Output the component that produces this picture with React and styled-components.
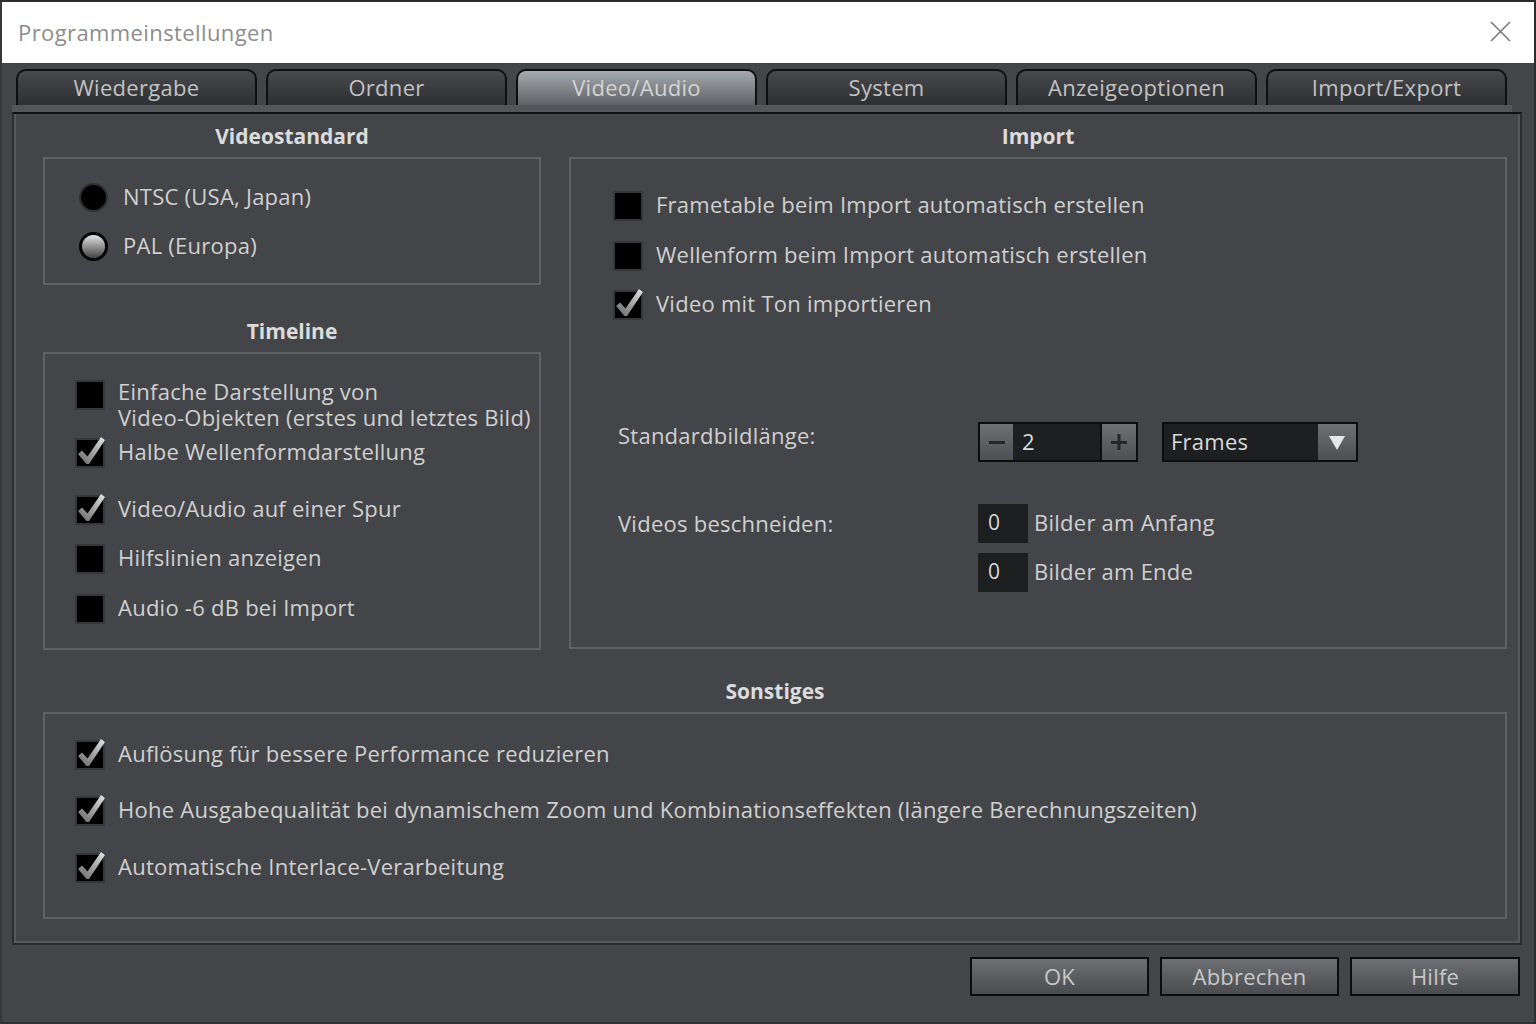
import React from 'react'
import styled, { createGlobalStyle, css } from 'styled-components'

const GlobalStyle = createGlobalStyle`
  html, body {
    margin: 0;
    padding: 0;
    background: #2c2d30;
  }
  body {
    font-family: "Open Sans", "Noto Sans", sans-serif;
  }
`

const Screen = styled.div`
  width: 1536px;
  height: 1024px;
  overflow: hidden;
  box-sizing: border-box;
  padding-top: 2px;
  background: #2c2d30;
`
const Dialog = styled.div`
  width: 1534px;
  height: 1022px;
  box-sizing: border-box;
  display: flex;
  flex-direction: column;
  background: #444549;
  border-left: 2px solid #37383b;
  border-bottom: 2px solid #303134;
`
const TitleBar = styled.div`
  height: 61px;
  flex-shrink: 0;
  background: #ffffff;
  display: flex;
  align-items: center;
  justify-content: space-between;
  padding: 0 23px 2px 16px;
  box-sizing: border-box;
`
const Title = styled.span`
  font-size: 22px;
  letter-spacing: 0.4px;
  color: #8d8d8d;
`
const TabRow = styled.div`
  display: flex;
  gap: 9px;
  height: 36px;
  margin-top: 6px;
  padding-left: 14px;
`
const Tab = styled.div`
  width: 241px;
  height: 36px;
  box-sizing: border-box;
  border: 2px solid #0e0f10;
  border-bottom: none;
  border-radius: 10px 10px 0 0;
  display: flex;
  align-items: center;
  justify-content: center;
  padding-bottom: 2px;
  font-size: 22px;
  letter-spacing: 0.3px;
  ${p => p.$active
    ? css`
        background: linear-gradient(#a6a9ad, #5e6166);
        color: #d4d4d4;
      `
    : css`
        background: linear-gradient(#47494d, #2d2f32);
        color: #c2c2c2;
      `}
`
const TabBand = styled.div`
  margin-left: 10px;
  width: 1500px;
  height: 7px;
  background: #54565a;
`
const Panel = styled.div`
  margin-left: 10px;
  width: 1510px;
  height: 833px;
  box-sizing: border-box;
  border-top: 2px solid #0f1011;
  border-left: 2px solid #2b2c2f;
  border-right: 2px solid #2b2c2f;
  border-bottom: 2px solid #2b2c2f;
  box-shadow: inset 2px 0 0 #56585c, inset -2px 0 0 #56585c, inset 0 -2px 0 #56585c;
  padding: 0 13px 0 29px;
  display: flex;
  flex-direction: column;
`
const Columns = styled.div`
  display: flex;
  gap: 28px;
`
const Column = styled.div`
  display: flex;
  flex-direction: column;
  ${p => (p.$width ? `width: ${p.$width}px;` : 'flex: 1;')}
`
const Section = styled.section`
  display: flex;
  flex-direction: column;
  margin-top: ${p => p.$top || 0}px;
`
const Heading = styled.h3`
  margin: 0;
  height: 43px;
  line-height: 44px;
  text-align: center;
  font-size: 21px;
  font-weight: 700;
  color: #dcdcdc;
`
const GroupBox = styled.div`
  box-sizing: border-box;
  height: ${p => p.$height}px;
  border: 2px solid #5f6164;
  padding: ${p => p.$pad};
  display: flex;
  flex-direction: column;
`
const RadioRow = styled.div`
  display: flex;
  align-items: center;
  gap: 15px;
  height: 29px;
  margin-top: ${p => p.$top || 0}px;
`
const Radio = styled.span`
  width: 29px;
  height: 29px;
  flex-shrink: 0;
  box-sizing: border-box;
  border-radius: 50%;
  ${p => p.$filled
    ? css`
        background: #000;
        border: 2px solid #2f3033;
      `
    : css`
        background: linear-gradient(#e4e4e4, #8a8a8a 55%, #444);
        border: 3px solid #050505;
      `}
`
const Text = styled.span`
  margin: -2px 0 2px;
  font-size: 22px;
  letter-spacing: 0.25px;
  line-height: 26px;
  color: #d0d0d0;
  white-space: nowrap;
`
const Line = styled.span`
  display: block;
  height: 26px;
`
const CheckRow = styled.div`
  display: flex;
  align-items: ${p => (p.$multi ? 'flex-start' : 'center')};
  gap: 13px;
  margin-top: ${p => p.$top || 0}px;
`
const Box = styled.span`
  position: relative;
  width: 30px;
  height: 30px;
  flex-shrink: 0;
  box-sizing: border-box;
  background: #000;
  border: 2px solid #36373a;
`
const Mark = styled.svg`
  position: absolute;
  left: -2px;
  top: -2px;
  width: 30px;
  height: 30px;
  overflow: visible;
`
const FormRow = styled.div`
  display: flex;
  align-items: flex-start;
  padding-left: 5px;
  margin-top: ${p => p.$top}px;
`
const FormLabel = styled.span`
  width: 360px;
  flex-shrink: 0;
  font-size: 22px;
  letter-spacing: 0.25px;
  line-height: 26px;
  padding-top: ${p => p.$offset || 0}px;
  color: #d0d0d0;
`
const Controls = styled.div`
  display: flex;
  gap: ${p => p.$gap || 0}px;
  flex-direction: ${p => (p.$stack ? 'column' : 'row')};
`
const Spin = styled.div`
  display: flex;
  width: 160px;
  height: 40px;
  box-sizing: border-box;
  border: 2px solid #0d0d0e;
  background: #1e1f21;
`
const GrayButton = styled.span`
  width: ${p => p.$width}px;
  flex-shrink: 0;
  display: flex;
  align-items: center;
  justify-content: center;
  background: linear-gradient(#6e7074, #4d4f53);
  ${p => p.$edge && `border-${p.$edge}: 2px solid #0d0d0e;`}
`
const Value = styled.span`
  flex: 1;
  padding-left: ${p => p.$pad || 9}px;
  font-size: 22px;
  letter-spacing: 0.25px;
  line-height: 34px;
  color: #dadada;
`
const Select = styled.div`
  display: flex;
  width: 196px;
  height: 40px;
  margin-left: 24px;
  box-sizing: border-box;
  border: 2px solid #0d0d0e;
  background: #1e1f21;
`
const Arrow = styled.span`
  width: 0;
  height: 0;
  border-left: 8px solid transparent;
  border-right: 8px solid transparent;
  border-top: 14px solid #e6e6e6;
  margin-top: 2px;
`
const InputRow = styled.div`
  display: flex;
  align-items: center;
  gap: 6px;
`
const SmallInput = styled.span`
  width: 50px;
  height: 39px;
  box-sizing: border-box;
  padding-left: 10px;
  background: #1d1e20;
  font-size: 21px;
  line-height: 37px;
  color: #d6d6d6;
`
const ButtonRow = styled.div`
  display: flex;
  justify-content: flex-end;
  gap: 11px;
  margin-top: 12px;
  padding-right: 14px;
`
const Button = styled.button`
  width: ${p => p.$width || 179}px;
  height: 39px;
  box-sizing: border-box;
  border: 2px solid #0c0c0d;
  background: linear-gradient(#6d6f73, #4a4c50);
  font-family: inherit;
  font-size: 22px;
  letter-spacing: 0.2px;
  line-height: 33px;
  color: #c8c8c8;
  padding: 0;
`

const CheckIcon = () => (
  <Mark viewBox="0 0 30 30">
    <defs>
      <linearGradient id="chk" x1="1" y1="0" x2="0" y2="1">
        <stop offset="0" stopColor="#e6e6e6" />
        <stop offset="0.55" stopColor="#9a9a9a" />
        <stop offset="1" stopColor="#6a6a6a" />
      </linearGradient>
    </defs>
    <polygon
      points="3,16 7,12.5 12.5,18.5 26,-1 30,2 14,26 11.5,26"
      fill="url(#chk)"
    />
  </Mark>
)

const Check = ({ checked, top, multi, children }) => (
  <CheckRow $top={top} $multi={multi}>
    <Box>{checked && <CheckIcon />}</Box>
    <Text>{children}</Text>
  </CheckRow>
)

const tabs = ['Wiedergabe', 'Ordner', 'Video/Audio', 'System', 'Anzeigeoptionen', 'Import/Export']

export default function App() {
  return (
    <Screen>
      <GlobalStyle />
      <Dialog>
        <TitleBar>
          <Title>Programmeinstellungen</Title>
          <svg width="21" height="21" viewBox="0 0 21 21">
            <path d="M1 1 L20 20 M20 1 L1 20" stroke="#7a7a7a" strokeWidth="1.6" />
          </svg>
        </TitleBar>

        <TabRow>
          {tabs.map(t => (
            <Tab key={t} $active={t === 'Video/Audio'}>{t}</Tab>
          ))}
        </TabRow>
        <TabBand />

        <Panel>
          <Columns>
            <Column $width={498}>
              <Section>
                <Heading>Videostandard</Heading>
                <GroupBox $height={128} $pad="24px 0 0 34px">
                  <RadioRow>
                    <Radio $filled />
                    <Text>NTSC (USA, Japan)</Text>
                  </RadioRow>
                  <RadioRow $top={20}>
                    <Radio />
                    <Text>PAL (Europa)</Text>
                  </RadioRow>
                </GroupBox>
              </Section>

              <Section $top={24}>
                <Heading>Timeline</Heading>
                <GroupBox $height={298} $pad="26px 0 0 30px">
                  <Check multi>
                    <Line>Einfache Darstellung von</Line>
                    <Line>Video-Objekten (erstes und letztes Bild)</Line>
                  </Check>
                  <Check checked top={6}>Halbe Wellenformdarstellung</Check>
                  <Check checked top={27}>Video/Audio auf einer Spur</Check>
                  <Check top={19}>Hilfslinien anzeigen</Check>
                  <Check top={20}>Audio -6 dB bei Import</Check>
                </GroupBox>
              </Section>
            </Column>

            <Column>
              <Section>
                <Heading>Import</Heading>
                <GroupBox $height={492} $pad="32px 0 0 42px">
                  <Check>Frametable beim Import automatisch erstellen</Check>
                  <Check top={20}>Wellenform beim Import automatisch erstellen</Check>
                  <Check checked top={19}>Video mit Ton importieren</Check>

                  <FormRow $top={102}>
                    <FormLabel>Standardbildlänge:</FormLabel>
                    <Controls>
                      <Spin>
                        <GrayButton $width={33}>
                          <svg width="18" height="18" viewBox="0 0 18 18">
                            <rect x="1" y="8" width="16" height="3" fill="#26272a" />
                          </svg>
                        </GrayButton>
                        <Value>2</Value>
                        <GrayButton $width={34} $edge="left">
                          <svg width="18" height="18" viewBox="0 0 18 18">
                            <rect x="1" y="8" width="16" height="3" fill="#26272a" />
                            <rect x="7.5" y="1" width="3" height="16" fill="#26272a" />
                          </svg>
                        </GrayButton>
                      </Spin>
                      <Select>
                        <Value $pad={7}>Frames</Value>
                        <GrayButton $width={38}>
                          <Arrow />
                        </GrayButton>
                      </Select>
                    </Controls>
                  </FormRow>

                  <FormRow $top={42}>
                    <FormLabel $offset={6}>Videos beschneiden:</FormLabel>
                    <Controls $stack $gap={10}>
                      <InputRow>
                        <SmallInput>0</SmallInput>
                        <Text>Bilder am Anfang</Text>
                      </InputRow>
                      <InputRow>
                        <SmallInput>0</SmallInput>
                        <Text>Bilder am Ende</Text>
                      </InputRow>
                    </Controls>
                  </FormRow>
                </GroupBox>
              </Section>
            </Column>
          </Columns>

          <Section $top={19}>
            <Heading>Sonstiges</Heading>
            <GroupBox $height={207} $pad="26px 0 0 30px">
              <Check checked>Auflösung für bessere Performance reduzieren</Check>
              <Check checked top={26}>
                Hohe Ausgabequalität bei dynamischem Zoom und Kombinationseffekten (längere Berechnungszeiten)
              </Check>
              <Check checked top={27}>Automatische Interlace-Verarbeitung</Check>
            </GroupBox>
          </Section>
        </Panel>

        <ButtonRow>
          <Button>OK</Button>
          <Button>Abbrechen</Button>
          <Button $width={170}>Hilfe</Button>
        </ButtonRow>
      </Dialog>
    </Screen>
  )
}
